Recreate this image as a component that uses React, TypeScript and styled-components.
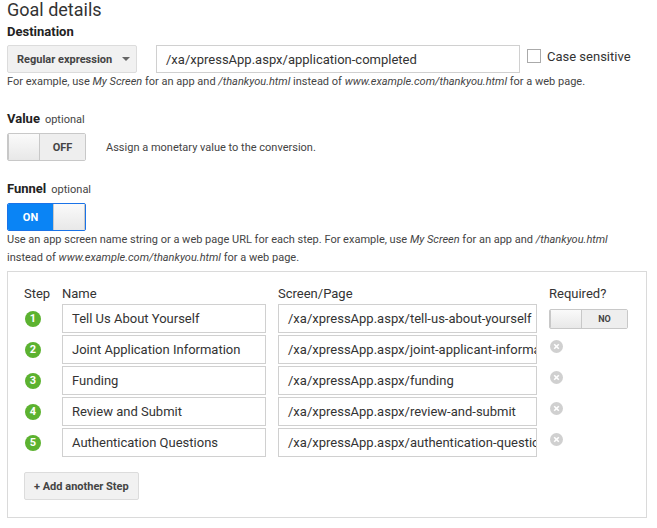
import React from "react";
import styled, { createGlobalStyle } from "styled-components";

const Global = createGlobalStyle`
  body { margin: 0; background: #fff; font-family: Roboto, "Liberation Sans", sans-serif; color: #222; }
`;

const Page = styled.div`
  padding: 0 7px;
  width: 640px;
`;

const Title = styled.h1`
  font-size: 18px;
  font-weight: 400;
  margin: 0;
  line-height: 20px;
  color: #333;
`;

const Label = styled.div`
  font-size: 13px;
  font-weight: 700;
  color: #222;
  line-height: 16px;
  margin-top: ${({ $top }: { $top: number }) => $top}px;
  span { font-weight: 400; font-size: 11px; margin-left: 5px; color: #444; }
`;

const DestRow = styled.div`
  display: flex;
  align-items: center;
  margin-top: 5px;
`;

const Dropdown = styled.div`
  width: 130px;
  height: 28px;
  box-sizing: border-box;
  border: 1px solid #dcdcdc;
  background: #f1f1f1;
  border-radius: 2px;
  font-size: 11px;
  font-weight: 700;
  color: #444;
  display: flex;
  align-items: center;
  padding-left: 9px;
  gap: 7px;
  &::after { content: ""; border: 4px solid transparent; border-top-color: #666; border-bottom: 0; margin-left: 3px; }
`;

const TextInput = styled.div<{ $w: number; $fs?: number }>`
  width: ${({ $w }) => $w}px;
  height: ${({ $fs }) => ($fs ? 29 : 28)}px;
  box-sizing: border-box;
  border: 1px solid #d0d0d0;
  font-size: ${({ $fs }) => $fs || 13}px;
  color: #333;
  padding-left: 9px;
  display: flex;
  align-items: center;
  white-space: nowrap;
  overflow: hidden;
`;

const Check = styled.label`
  display: flex;
  align-items: center;
  gap: 6px;
  font-size: 13px;
  color: #333;
  margin-left: 7px;
  margin-top: -6px;
  &::before { content: ""; width: 12px; height: 12px; border: 1px solid #aaa; }
`;

const Help = styled.p`
  font-size: 11px;
  color: #444;
  margin: 0;
  line-height: 18px;
  i { font-style: italic; }
`;

const ToggleRow = styled.div`
  display: flex;
  align-items: center;
  gap: 20px;
  margin-top: 5px;
  font-size: 11px;
  color: #444;
`;

const Toggle = styled.div<{ $on?: boolean; $small?: boolean }>`
  width: 79px;
  height: ${({ $small }) => ($small ? 20 : 28)}px;
  box-sizing: border-box;
  border: 1px solid ${({ $on }) => ($on ? "#1a73e8" : "#c8c8c8")};
  border-radius: 2px;
  display: flex;
  flex-direction: ${({ $on }) => ($on ? "row" : "row-reverse")};
  overflow: hidden;
  font-size: ${({ $small }) => ($small ? 9 : 11)}px;
  font-weight: 700;
`;

const ToggleLabel = styled.div<{ $on?: boolean }>`
  flex: 1;
  display: flex;
  align-items: center;
  justify-content: center;
  background: ${({ $on }) => ($on ? "#0a84f5" : "#eeeeee")};
  color: ${({ $on }) => ($on ? "#fff" : "#444")};
`;

const Knob = styled.div`
  width: 30px;
  background: linear-gradient(#fafafa, #e8e8e8);
  border: 0 solid #c8c8c8;
  border-left-width: 1px;
  border-right-width: 1px;
`;

const Box = styled.div`
  margin-top: 4px;
  border: 1px solid #dadada;
  padding: 14px 16px 17px;
`;

const Grid = styled.div`
  display: grid;
  grid-template-columns: 38px 204px 12px 259px 12px 80px;
  row-gap: 2px;
  align-items: center;
  font-size: 13px;
  color: #333;
`;

const Head = styled.div`
  line-height: 16px;
`;

const StepNum = styled.div`
  width: 16px;
  height: 16px;
  border-radius: 50%;
  background: #5cb230;
  color: #fff;
  font-size: 11px;
  font-weight: 700;
  display: flex;
  align-items: center;
  justify-content: center;
  margin-left: 1px;
`;

const Remove = styled.svg`
  width: 13px;
  height: 13px;
  margin-left: 1px;
  margin-top: -6px;
`;

const AddButton = styled.button`
  margin-top: 15px;
  height: 28px;
  padding: 0 9px;
  border: 1px solid #dcdcdc;
  background: #f1f1f1;
  border-radius: 2px;
  font-family: inherit;
  font-size: 11px;
  font-weight: 700;
  color: #444;
`;

const steps = [
  ["Tell Us About Yourself", "/xa/xpressApp.aspx/tell-us-about-yourself"],
  ["Joint Application Information", "/xa/xpressApp.aspx/joint-applicant-information"],
  ["Funding", "/xa/xpressApp.aspx/funding"],
  ["Review and Submit", "/xa/xpressApp.aspx/review-and-submit"],
  ["Authentication Questions", "/xa/xpressApp.aspx/authentication-questions"],
];

export default function App() {
  return (
    <Page>
      <Global />
      <Title>Goal details</Title>
      <Label $top={4}>Destination</Label>
      <DestRow>
        <Dropdown>Regular expression</Dropdown>
        <span style={{ width: 19 }} />
        <TextInput $w={364}>/xa/xpressApp.aspx/application-completed</TextInput>
        <Check>Case sensitive</Check>
      </DestRow>
      <Help>For example, use <i>My Screen</i> for an app and <i>/thankyou.html</i> instead of <i>www.example.com/thankyou.html</i> for a web page.</Help>
      <Label $top={20}>Value<span>optional</span></Label>
      <ToggleRow>
        <Toggle><ToggleLabel>OFF</ToggleLabel><Knob /></Toggle>
        Assign a monetary value to the conversion.
      </ToggleRow>
      <Label $top={20}>Funnel<span>optional</span></Label>
      <ToggleRow>
        <Toggle $on><ToggleLabel $on>ON</ToggleLabel><Knob /></Toggle>
      </ToggleRow>
      <Help>Use an app screen name string or a web page URL for each step. For example, use <i>My Screen</i> for an app and <i>/thankyou.html</i><br />instead of <i>www.example.com/thankyou.html</i> for a web page.</Help>
      <Box>
        <Grid>
          <Head>Step</Head><Head>Name</Head><span /><Head>Screen/Page</Head><span /><Head>Required?</Head>
          {steps.map(([name, url], i) => (
            <React.Fragment key={i}>
              <StepNum>{i + 1}</StepNum>
              <TextInput $w={204} $fs={13}>{name}</TextInput>
              <span />
              <TextInput $w={259} $fs={13}>{url}</TextInput>
              <span />
              {i === 0 ? (
                <Toggle $small><ToggleLabel>NO</ToggleLabel><Knob /></Toggle>
              ) : (
                <Remove viewBox="0 0 13 13">
                  <circle cx="6.5" cy="6.5" r="6.5" fill="#d0d0d0" />
                  <path d="M4.2 4.2l4.6 4.6M8.8 4.2l-4.6 4.6" stroke="#fff" strokeWidth="1.6" />
                </Remove>
              )}
            </React.Fragment>
          ))}
        </Grid>
        <AddButton>+ Add another Step</AddButton>
      </Box>
    </Page>
  );
}
